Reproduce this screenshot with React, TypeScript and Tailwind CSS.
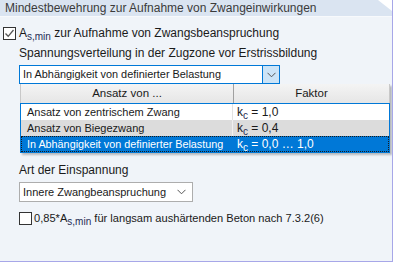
import React from "react";

const font = { fontFamily: '"Liberation Sans", Arial, sans-serif' };

function Sub({ children }: { children: React.ReactNode }) {
  return <span className="text-[10px] relative top-[3px] text-[#1f2d55]">{children}</span>;
}

function Chevron() {
  return (
    <svg width="9" height="6" viewBox="0 0 9 6">
      <path d="M0.5 0.8 L4.5 4.8 L8.5 0.8" fill="none" stroke="#555" strokeWidth="1" />
    </svg>
  );
}

export default function App() {
  return (
    <div className="w-[393px] h-[263px] bg-white text-[12px] text-[#1a1a1a] whitespace-nowrap" style={font}>
      <div className="relative w-[393px] h-[262px] bg-[#f0f4f9] border-r border-b border-[#a7a7e8] overflow-hidden">
        <div className="h-[17px] bg-[#dae4f1] border-b border-[#f7f9fc] pl-[5px] leading-[16px] text-[#3b3b3b]">
          Mindestbewehrung zur Aufnahme von Zwangeinwirkungen
        </div>
        <svg className="absolute top-0 right-0" width="14" height="11" viewBox="0 0 14 11">
          <polygon points="0,0 14,0 14,11" fill="#ffffff" />
        </svg>

        <div className="flex items-center mt-[9px] pl-[3px] h-[14px]">
          <div className="w-[13px] h-[13px] border border-[#333] bg-white flex items-center justify-center">
            <svg width="11" height="11" viewBox="0 0 11 11">
              <path d="M1.5 5.5 L4.2 8.3 L9.5 2" fill="none" stroke="#555" strokeWidth="1.3" />
            </svg>
          </div>
          <span className="ml-[3px] leading-[14px]">
            A<Sub>s,min</Sub> zur Aufnahme von Zwangsbeanspruchung
          </span>
        </div>

        <div className="pl-[19px] mt-[6px] leading-[14px]">Spannungsverteilung in der Zugzone vor Erstrissbildung</div>

        <div className="ml-[19px] mt-[5px] w-[261px] h-[19px] border border-[#0078d7] bg-white flex">
          <div className="flex-1 pl-[3px] leading-[17px] text-[10.9px]">In Abhängigkeit von definierter Belastung</div>
          <div className="w-[17px] h-[17px] bg-[#cce4f7] border-l border-[#0078d7] flex items-center justify-center">
            <Chevron />
          </div>
        </div>

        <div className="ml-[20px] w-[370px] shadow-[2px_2px_2px_rgba(0,0,0,0.25)] relative z-10 text-[11px]">
          <div className="flex h-[19px] bg-gradient-to-b from-[#f4f4f4] to-[#e6e6e6] border-l border-r border-[#c8c8c8] text-[11.5px]">
            <div className="w-[213px] text-center leading-[19px] border-r border-[#a0a0a0]">Ansatz von ...</div>
            <div className="flex-1 text-center leading-[19px]">Faktor</div>
          </div>
          <div className="border border-[#0078d7] bg-white">
            <div className="flex h-[16px] bg-white">
              <div className="w-[212px] pl-[6px] leading-[16px] border-r border-[#e2e2e2] text-[11px]">Ansatz von zentrischem Zwang</div>
              <div className="flex-1 pl-[4px] leading-[16px] text-[12px]">
                k<Sub>c</Sub> = 1,0
              </div>
            </div>
            <div className="flex h-[16px] bg-[#dcdcdc]">
              <div className="w-[212px] pl-[6px] leading-[16px] border-r border-[#f0f0f0] text-[11px]">Ansatz von Biegezwang</div>
              <div className="flex-1 pl-[4px] leading-[16px] text-[12px]">
                k<Sub>c</Sub> = 0,4
              </div>
            </div>
            <div className="flex h-[16px] bg-[#0078d7] text-white border border-dotted border-[#1a1a1a]">
              <div className="w-[211px] pl-[5px] leading-[14px] overflow-hidden text-[10.8px]">In Abhängigkeit von definierter Belastung</div>
              <div className="flex-1 pl-[4px] leading-[14px] text-[12px]">
                k<span className="text-[10px] relative top-[3px]">c</span> = 0,0 … 1,0
              </div>
            </div>
          </div>
        </div>

        <div className="pl-[19px] mt-[10px] leading-[14px]">Art der Einspannung</div>

        <div className="ml-[19px] mt-[5px] w-[174px] h-[20px] border border-[#adadad] bg-white flex items-center">
          <div className="flex-1 pl-[3px] leading-[18px] text-[11px]">Innere Zwangbeanspruchung</div>
          <div className="w-[17px] flex items-center justify-center mr-[2px]">
            <Chevron />
          </div>
        </div>

        <div className="flex items-center mt-[9px] pl-[19px] h-[14px]">
          <div className="w-[13px] h-[13px] border border-[#333] bg-white" />
          <span className="ml-[2px] leading-[14px] text-[11.1px]">
            0,85*A<Sub>s,min</Sub> für langsam aushärtenden Beton nach 7.3.2(6)
          </span>
        </div>
      </div>
    </div>
  );
}
